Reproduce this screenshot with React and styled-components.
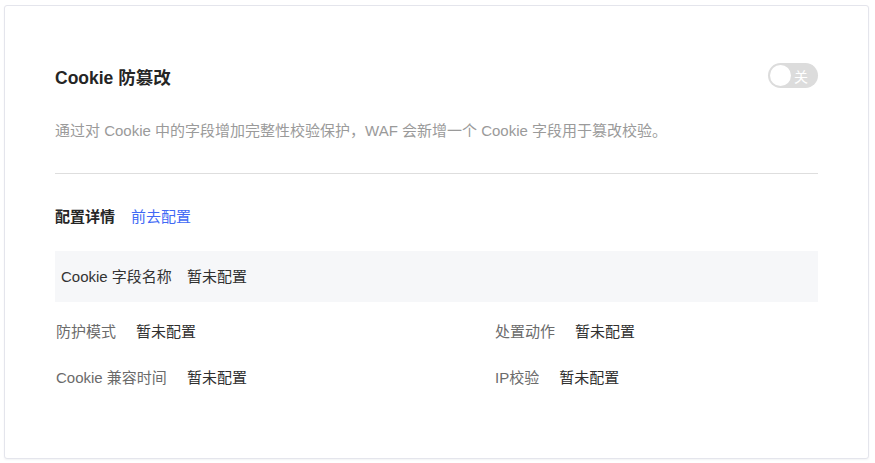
import React from "react";
import styled, { createGlobalStyle } from "styled-components";

const Global = createGlobalStyle`
  html, body { margin: 0; padding: 0; background: #ffffff; }
  body { font-family: "Liberation Sans", "Noto Sans CJK SC", sans-serif; }
`;

const Page = styled.div`
  padding: 5px 6px 4px 4px;
  width: 875px;
  height: 463px;
  box-sizing: border-box;
`;

const Card = styled.section`
  box-sizing: border-box;
  height: 454px;
  border: 1px solid #e4e5ec;
  border-radius: 3px;
  box-shadow: 0 1px 2px rgba(40, 50, 90, 0.06);
  background: #fff;
  padding: 57px 50px 0 50px;
`;

const Header = styled.div`
  display: flex;
  align-items: center;
  justify-content: space-between;
  height: 25px;
`;

const Title = styled.h2`
  margin: 0;
  padding-top: 4px;
  font-size: 17.5px;
  line-height: 24px;
  font-weight: 700;
  color: #252525;
`;

const Toggle = styled.button`
  position: relative;
  width: 50px;
  height: 25px;
  border: none;
  border-radius: 13px;
  background: #dcdcdc;
  padding: 0 0 0 26px;
  display: flex;
  align-items: center;
  color: #fff;
  font-size: 14px;
  font-family: "Noto Sans CJK SC", sans-serif;
  cursor: pointer;
`;

const Knob = styled.span`
  position: absolute;
  left: 2px;
  top: 2px;
  width: 21px;
  height: 21px;
  border-radius: 50%;
  background: #fff;
`;

const Desc = styled.p`
  margin: 32px 0 0;
  font-size: 15px;
  line-height: 22px;
  color: #9a9a9a;
`;

const Divider = styled.hr`
  margin: 31px 0 0;
  border: none;
  height: 1px;
  background: #dedede;
`;

const SectionHead = styled.div`
  margin-top: 32px;
  display: flex;
  align-items: center;
  gap: 16px;
  font-size: 15px;
  line-height: 22px;
`;

const SectionTitle = styled.span`
  font-weight: 700;
  color: #262626;
`;

const Link = styled.a`
  color: #4169f5;
  text-decoration: none;
  cursor: pointer;
`;

const Highlight = styled.div`
  margin-top: 23px;
  height: 51px;
  background: #f6f7f9;
  display: flex;
  align-items: center;
  padding-left: 5px;
`;

const Field = styled.div`
  display: flex;
  gap: ${(p) => p.$gap || 20}px;
  font-size: 15px;
  line-height: 22px;
  padding-left: 1px;
`;

const Label = styled.span`
  color: ${(p) => (p.$dark ? "#333" : "#6b6b6b")};
`;

const Value = styled.span`
  color: #2f2f2f;
`;

const Grid = styled.div`
  margin-top: 19px;
  display: grid;
  grid-template-columns: 439px 1fr;
  row-gap: 24px;
`;

const fields = [
  ["防护模式", "暂未配置"],
  ["处置动作", "暂未配置"],
  ["Cookie 兼容时间", "暂未配置"],
  ["IP校验", "暂未配置"],
];

export default function App() {
  return (
    <>
      <Global />
      <Page>
        <Card>
          <Header>
            <Title>Cookie 防篡改</Title>
            <Toggle aria-label="switch">
              <Knob />关
            </Toggle>
          </Header>
          <Desc>
            通过对 Cookie 中的字段增加完整性校验保护，WAF 会新增一个 Cookie 字段用于篡改校验。
          </Desc>
          <Divider />
          <SectionHead>
            <SectionTitle>配置详情</SectionTitle>
            <Link>前去配置</Link>
          </SectionHead>
          <Highlight>
            <Field $gap={15}>
              <Label $dark>Cookie 字段名称</Label>
              <Value>暂未配置</Value>
            </Field>
          </Highlight>
          <Grid>
            {fields.map(([l, v]) => (
              <Field key={l}>
                <Label>{l}</Label>
                <Value>{v}</Value>
              </Field>
            ))}
          </Grid>
        </Card>
      </Page>
    </>
  );
}
